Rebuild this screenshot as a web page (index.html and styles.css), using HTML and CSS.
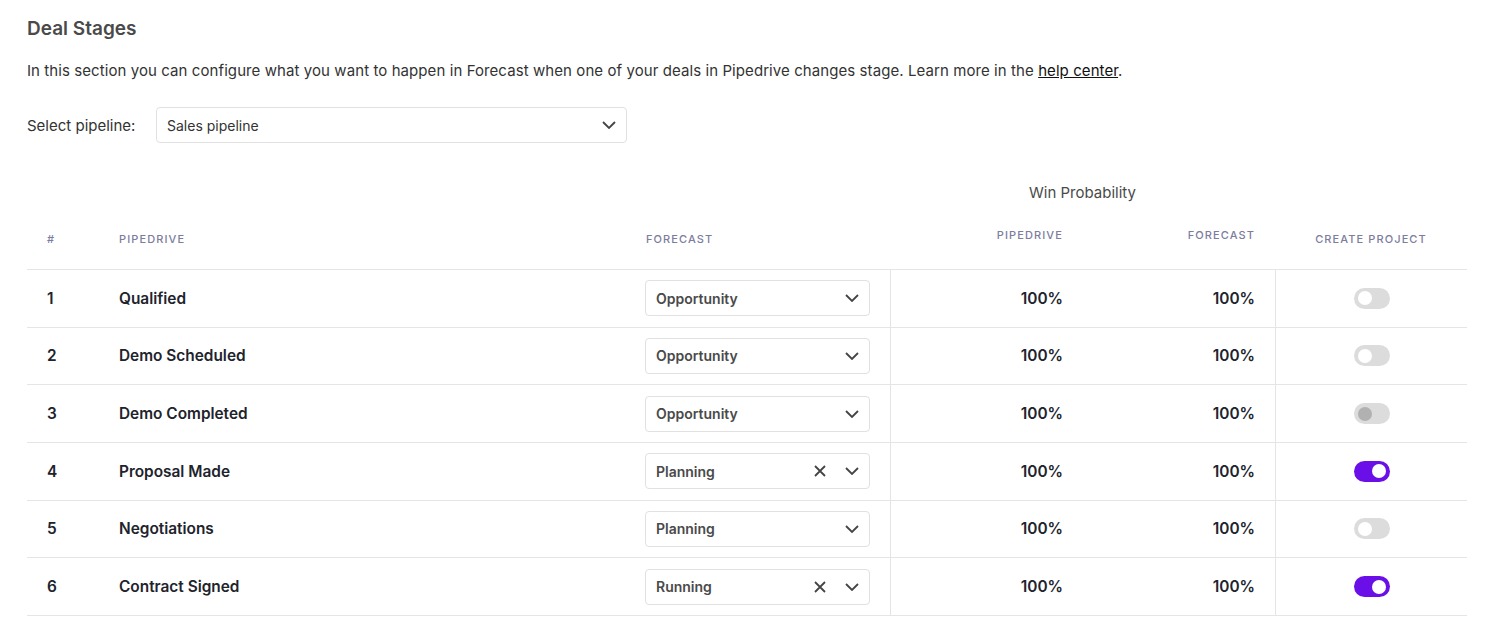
FILE: index.html
```html
<!DOCTYPE html>
<html lang="en">
<head>
    <meta charset="UTF-8">
    <title>Deal Stages</title>
    <link rel="stylesheet" href="styles.css">
</head>
<body>
  <div class="page">
    <h2 class="title">Deal Stages</h2>
    <p class="intro">In this section you can configure what you want to happen in Forecast when one of your deals in Pipedrive changes stage. Learn more in the <a href="#">help center</a>.</p>

    <div class="pipeline">
      <span class="pipeline_label">Select pipeline:</span>
      <div class="select select--wide">
        <span class="select_value">Sales pipeline</span>
        <svg class="chevron" width="14" height="8" viewBox="0 0 14 8"><path d="M1 1l6 6 6-6" fill="none" stroke="#444" stroke-width="1.8"/></svg>
      </div>
    </div>

    <div class="stages">
      <div class="group_row">
        <span class="group_title">Win Probability</span>
      </div>
      <div class="row row--head">
        <div class="cell">#</div>
        <div class="cell">Pipedrive</div>
        <div class="cell cell--select">Forecast</div>
        <div class="cell cell--num cell--up">Pipedrive</div>
        <div class="cell cell--num cell--up cell--split">Forecast</div>
        <div class="cell cell--center">Create Project</div>
      </div>

      <div class="row">
        <div class="cell">1</div>
        <div class="cell">Qualified</div>
        <div class="cell cell--select">
          <div class="select"><span class="select_value">Opportunity</span><svg class="chevron" width="14" height="8" viewBox="0 0 14 8"><path d="M1 1l6 6 6-6" fill="none" stroke="#444" stroke-width="1.8"/></svg></div>
        </div>
        <div class="cell cell--num">100%</div>
        <div class="cell cell--num cell--split">100%</div>
        <div class="cell cell--center"><span class="toggle"></span></div>
      </div>

      <div class="row">
        <div class="cell">2</div>
        <div class="cell">Demo Scheduled</div>
        <div class="cell cell--select">
          <div class="select"><span class="select_value">Opportunity</span><svg class="chevron" width="14" height="8" viewBox="0 0 14 8"><path d="M1 1l6 6 6-6" fill="none" stroke="#444" stroke-width="1.8"/></svg></div>
        </div>
        <div class="cell cell--num">100%</div>
        <div class="cell cell--num cell--split">100%</div>
        <div class="cell cell--center"><span class="toggle"></span></div>
      </div>

      <div class="row">
        <div class="cell">3</div>
        <div class="cell">Demo Completed</div>
        <div class="cell cell--select">
          <div class="select"><span class="select_value">Opportunity</span><svg class="chevron" width="14" height="8" viewBox="0 0 14 8"><path d="M1 1l6 6 6-6" fill="none" stroke="#444" stroke-width="1.8"/></svg></div>
        </div>
        <div class="cell cell--num">100%</div>
        <div class="cell cell--num cell--split">100%</div>
        <div class="cell cell--center"><span class="toggle toggle--disabled"></span></div>
      </div>

      <div class="row">
        <div class="cell">4</div>
        <div class="cell">Proposal Made</div>
        <div class="cell cell--select">
          <div class="select"><span class="select_value">Planning</span><svg class="clear" width="12" height="12" viewBox="0 0 12 12"><path d="M1 1l10 10M11 1L1 11" fill="none" stroke="#444" stroke-width="1.8"/></svg><svg class="chevron" width="14" height="8" viewBox="0 0 14 8"><path d="M1 1l6 6 6-6" fill="none" stroke="#444" stroke-width="1.8"/></svg></div>
        </div>
        <div class="cell cell--num">100%</div>
        <div class="cell cell--num cell--split">100%</div>
        <div class="cell cell--center"><span class="toggle toggle--on"></span></div>
      </div>

      <div class="row">
        <div class="cell">5</div>
        <div class="cell">Negotiations</div>
        <div class="cell cell--select">
          <div class="select"><span class="select_value">Planning</span><svg class="chevron" width="14" height="8" viewBox="0 0 14 8"><path d="M1 1l6 6 6-6" fill="none" stroke="#444" stroke-width="1.8"/></svg></div>
        </div>
        <div class="cell cell--num">100%</div>
        <div class="cell cell--num cell--split">100%</div>
        <div class="cell cell--center"><span class="toggle"></span></div>
      </div>

      <div class="row">
        <div class="cell">6</div>
        <div class="cell">Contract Signed</div>
        <div class="cell cell--select">
          <div class="select"><span class="select_value">Running</span><svg class="clear" width="12" height="12" viewBox="0 0 12 12"><path d="M1 1l10 10M11 1L1 11" fill="none" stroke="#444" stroke-width="1.8"/></svg><svg class="chevron" width="14" height="8" viewBox="0 0 14 8"><path d="M1 1l6 6 6-6" fill="none" stroke="#444" stroke-width="1.8"/></svg></div>
        </div>
        <div class="cell cell--num">100%</div>
        <div class="cell cell--num cell--split">100%</div>
        <div class="cell cell--center"><span class="toggle toggle--on"></span></div>
      </div>
    </div>
  </div>
</body>
</html>
```

FILE: styles.css
```css
body {
  margin: 0;
  background: #fff;
  font-family: Inter, 'Noto Sans', sans-serif;
  color: #21232c;
}

.page {
  padding: 17px 25px 0 27px;
}

.title {
  margin: 0;
  font-size: 19px;
  font-weight: 600;
  line-height: 24px;
  color: #4a4a4a;
}

.intro {
  margin: 19px 0 0;
  font-size: 15px;
  line-height: 22px;
  letter-spacing: 0.08px;
  color: #333;
}

.intro a {
  color: #111;
  text-decoration: underline;
}

.pipeline {
  display: flex;
  align-items: center;
  margin-top: 25px;
}

.pipeline_label {
  width: 129px;
  font-size: 15px;
  color: #333;
}

.select {
  display: flex;
  align-items: center;
  box-sizing: border-box;
  width: 225px;
  height: 36px;
  padding: 0 10px;
  border: 1px solid #e1e1e1;
  border-radius: 4px;
  background: #fff;
}

.select--wide {
  width: 471px;
}

.select_value {
  flex: 1;
  font-size: 14px;
  font-weight: 600;
  color: #4a4a4a;
}

.select--wide .select_value {
  font-weight: 400;
  color: #333;
}

.clear {
  margin-right: 19px;
}

.stages {
  margin-top: 35px;
}

.group_row {
  display: grid;
  grid-template-columns: 863px 385px 192px;
}

.group_title {
  grid-column: 2;
  text-align: center;
  font-size: 15px;
  color: #4a4a4a;
  line-height: 30px;
}

.row {
  display: grid;
  grid-template-columns: 72px 546px 245px 193px 192px 192px;
  box-sizing: border-box;
  height: 57.67px;
  border-bottom: 1px solid #e5e5e5;
}

.row--head {
  height: 62px;
}

.cell {
  display: flex;
  align-items: center;
  padding-left: 20px;
  font-size: 15.4px;
  font-weight: 600;
}

.row--head .cell {
  font-size: 11px;
  font-weight: 500;
  letter-spacing: 1.1px;
  text-transform: uppercase;
  color: #7c7c9e;
}

.row--head .cell--up {
  padding-bottom: 8px;
}

.cell--select {
  padding-left: 0;
}

.row--head .cell--select {
  padding-left: 1px;
}

.cell--num {
  justify-content: flex-end;
  padding-left: 0;
  padding-right: 20px;
  border-left: 1px solid #e5e5e5;
}

.cell--split {
  border-left: none;
}

.cell--center {
  justify-content: center;
  padding-left: 0;
  border-left: 1px solid #e5e5e5;
}

.row--head .cell--num,
.row--head .cell--center {
  border-left: none;
}

.toggle {
  position: relative;
  width: 36px;
  height: 21px;
  border-radius: 11px;
  background: #dcdcdc;
}

.toggle::after {
  content: '';
  position: absolute;
  top: 3.5px;
  left: 4px;
  width: 14px;
  height: 14px;
  border-radius: 50%;
  background: #fff;
}

.toggle--disabled::after {
  background: #b1b1b1;
}

.toggle--on {
  background: #6a0fe8;
}

.toggle--on::after {
  left: 18px;
}
```
